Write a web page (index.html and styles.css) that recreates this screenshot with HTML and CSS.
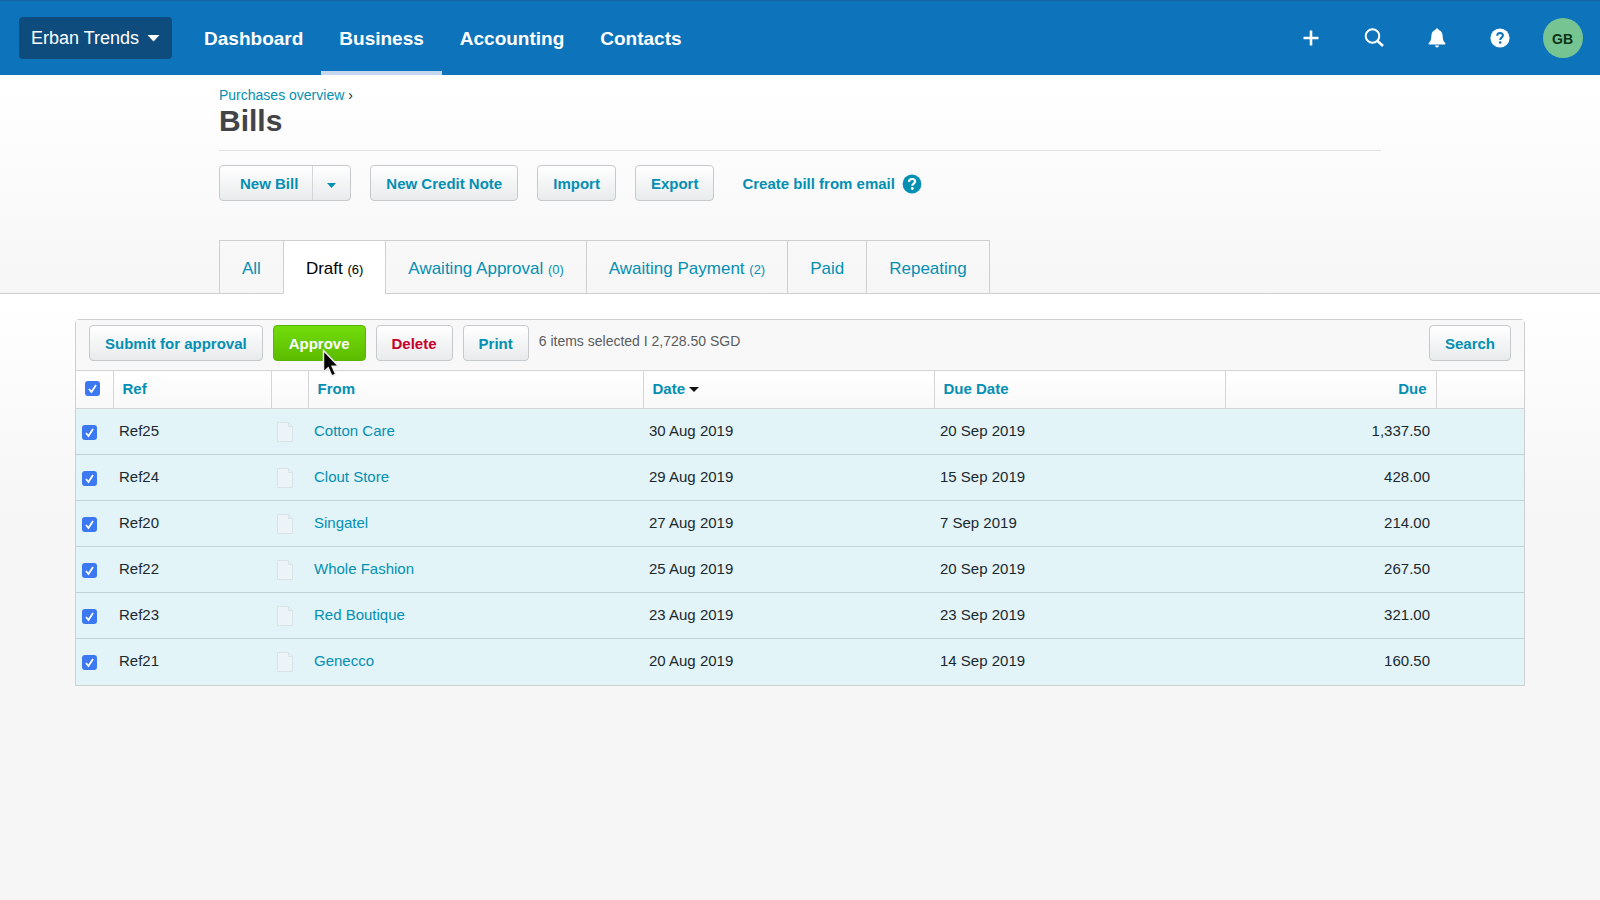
FILE: index.html
```html
<!DOCTYPE html>
<html lang="en">
<head>
  <meta charset="UTF-8">
  <meta name="viewport" content="width=device-width, initial-scale=1.0">
  <title>Bills</title>
  <link rel="stylesheet" href="styles.css">
</head>
<body>
  <header class="topbar">
    <button class="org" type="button">Erban Trends
      <svg width="13" height="7" viewBox="0 0 13 7"><path d="M0.5 0h12L6.5 6.5z" fill="#fff"/></svg>
    </button>
    <nav class="main-nav">
      <a href="#">Dashboard</a>
      <a href="#" class="active">Business</a>
      <a href="#">Accounting</a>
      <a href="#">Contacts</a>
    </nav>
    <div class="tools">
      <button type="button" aria-label="Add">
        <svg width="20" height="20" viewBox="0 0 20 20"><path d="M10 2.500v15M2.500 10h15" stroke="#fff" stroke-width="2.600" fill="none"/></svg>
      </button>
      <button type="button" aria-label="Search">
        <svg width="20" height="20" viewBox="0 0 20 20"><circle cx="8.500" cy="8" r="6.800" stroke="#fff" stroke-width="2" fill="none"/><path d="M13.300 12.800l5.700 5.200" stroke="#fff" stroke-width="2.600" fill="none"/></svg>
      </button>
      <button type="button" aria-label="Notifications">
        <svg width="20" height="20" viewBox="0 0 20 20"><path d="M10 .5c1 0 1.700.7 1.700 1.600 2.500.8 3.700 2.800 3.900 5.400.2 4 .7 6.200 2.700 7.500v1.400H1.700V15c2-1.300 2.500-3.500 2.700-7.500.2-2.600 1.400-4.600 3.900-5.400C8.300 1.200 9 .5 10 .5z" fill="#fff"/><path d="M8 17.500h4c0 1.100-.8 1.900-2 1.900s-2-.8-2-1.900z" fill="#fff"/></svg>
      </button>
      <button type="button" aria-label="Help">
        <svg width="20" height="20" viewBox="0 0 20 20"><circle cx="10" cy="10" r="9.600" fill="#fff"/><path d="M7.200 7.800c0-1.900 1.200-2.900 2.900-2.900s2.800 1 2.800 2.500c0 2.100-2.700 2.200-2.700 4.600" stroke="#0d73bb" stroke-width="2" fill="none"/><circle cx="10.200" cy="14.500" r="1.300" fill="#0d73bb"/></svg>
      </button>
      <button type="button" aria-label="Account"><span class="avatar">GB</span></button>
    </div>
  </header>

  <section class="page-head">
    <div class="container">
      <div class="crumbs"><a href="#">Purchases overview</a> ›</div>
      <h1>Bills</h1>
      <div class="actions">
        <div class="split">
          <button type="button" class="split-main">New Bill</button>
          <button type="button" class="split-more" aria-label="More options">
            <svg width="9" height="5" viewBox="0 0 9 5"><path d="M0 0h9L4.500 5z" fill="#048fb3"/></svg>
          </button>
        </div>
        <button type="button" class="btn">New Credit Note</button>
        <button type="button" class="btn">Import</button>
        <button type="button" class="btn">Export</button>
        <a href="#" class="email-link">Create bill from email
          <svg width="20" height="20" viewBox="0 0 20 20"><circle cx="10" cy="10" r="9.400" fill="#048fb3"/><path d="M7 7.900c0-1.900 1.300-2.900 3.100-2.900s3 1 3 2.500c0 2.100-2.800 2.200-2.800 4.300" stroke="#fff" stroke-width="2.200" fill="none"/><circle cx="10.300" cy="14.500" r="1.400" fill="#fff"/></svg>
        </a>
      </div>
      <nav class="tabs">
        <a href="#">All</a>
        <a href="#" class="active">Draft <small>(6)</small></a>
        <a href="#">Awaiting Approval <small>(0)</small></a>
        <a href="#">Awaiting Payment <small>(2)</small></a>
        <a href="#">Paid</a>
        <a href="#">Repeating</a>
      </nav>
    </div>
  </section>

  <main class="content">
    <div class="panel">
      <div class="toolbar">
        <button type="button" class="btn">Submit for approval</button>
        <div class="approve">
          <button type="button" class="btn btn-green">Approve</button>
          <svg class="pointer" width="18" height="30" viewBox="0 0 18 30"><path d="M1.500 1.500v21.500l4.700-4.300 3.700 8.300 3.800-1.700-3.600-8h6.400z" fill="#000" stroke="#eee" stroke-width="1.500"/></svg>
        </div>
        <button type="button" class="btn btn-red">Delete</button>
        <button type="button" class="btn">Print</button>
        <span class="summary">6 items selected I 2,728.50 SGD</span>
        <button type="button" class="btn search">Search</button>
      </div>
      <table class="bills">
        <colgroup>
          <col class="c-check"><col class="c-ref"><col class="c-file"><col class="c-from"><col class="c-date"><col class="c-date"><col class="c-due"><col class="c-end">
        </colgroup>
        <thead>
          <tr>
            <th><input type="checkbox" aria-label="Select all" checked></th>
            <th><a href="#">Ref</a></th>
            <th></th>
            <th><a href="#">From</a></th>
            <th><a href="#">Date</a> <svg width="10" height="5" viewBox="0 0 10 5"><path d="M0 0h10L5 5z" fill="#111"/></svg></th>
            <th><a href="#">Due Date</a></th>
            <th class="num"><a href="#">Due</a></th>
            <th></th>
          </tr>
        </thead>
        <tbody>
          <tr>
            <td><input type="checkbox" aria-label="Select Ref25" checked></td>
            <td>Ref25</td>
            <td><svg class="file" width="16" height="20" viewBox="0 0 16 20"><path d="M.5.5h11l4 4v15H.5zM11.500.5v4h4"/></svg></td>
            <td><a href="#">Cotton Care</a></td>
            <td>30 Aug 2019</td>
            <td>20 Sep 2019</td>
            <td class="num">1,337.50</td>
            <td></td>
          </tr>
          <tr>
            <td><input type="checkbox" aria-label="Select Ref24" checked></td>
            <td>Ref24</td>
            <td><svg class="file" width="16" height="20" viewBox="0 0 16 20"><path d="M.5.5h11l4 4v15H.5zM11.500.5v4h4"/></svg></td>
            <td><a href="#">Clout Store</a></td>
            <td>29 Aug 2019</td>
            <td>15 Sep 2019</td>
            <td class="num">428.00</td>
            <td></td>
          </tr>
          <tr>
            <td><input type="checkbox" aria-label="Select Ref20" checked></td>
            <td>Ref20</td>
            <td><svg class="file" width="16" height="20" viewBox="0 0 16 20"><path d="M.5.5h11l4 4v15H.5zM11.500.5v4h4"/></svg></td>
            <td><a href="#">Singatel</a></td>
            <td>27 Aug 2019</td>
            <td>7 Sep 2019</td>
            <td class="num">214.00</td>
            <td></td>
          </tr>
          <tr>
            <td><input type="checkbox" aria-label="Select Ref22" checked></td>
            <td>Ref22</td>
            <td><svg class="file" width="16" height="20" viewBox="0 0 16 20"><path d="M.5.5h11l4 4v15H.5zM11.500.5v4h4"/></svg></td>
            <td><a href="#">Whole Fashion</a></td>
            <td>25 Aug 2019</td>
            <td>20 Sep 2019</td>
            <td class="num">267.50</td>
            <td></td>
          </tr>
          <tr>
            <td><input type="checkbox" aria-label="Select Ref23" checked></td>
            <td>Ref23</td>
            <td><svg class="file" width="16" height="20" viewBox="0 0 16 20"><path d="M.5.5h11l4 4v15H.5zM11.500.5v4h4"/></svg></td>
            <td><a href="#">Red Boutique</a></td>
            <td>23 Aug 2019</td>
            <td>23 Sep 2019</td>
            <td class="num">321.00</td>
            <td></td>
          </tr>
          <tr>
            <td><input type="checkbox" aria-label="Select Ref21" checked></td>
            <td>Ref21</td>
            <td><svg class="file" width="16" height="20" viewBox="0 0 16 20"><path d="M.5.5h11l4 4v15H.5zM11.500.5v4h4"/></svg></td>
            <td><a href="#">Genecco</a></td>
            <td>20 Aug 2019</td>
            <td>14 Sep 2019</td>
            <td class="num">160.50</td>
            <td></td>
          </tr>
        </tbody>
      </table>
    </div>
  </main>
</body>
</html>
```

FILE: styles.css
```css
* {
  box-sizing: border-box;
}

body {
  margin: 0;
  background-color: #f6f6f6;
  color: #1c2830;
  font-family: "Liberation Sans", Arial, sans-serif;
  font-size: 15px;
  line-height: 18px;
}

a {
  color: #048fb3;
  text-decoration: none;
}

button {
  margin: 0;
  font-family: inherit;
  cursor: pointer;
}

svg {
  flex: none;
}

/* top bar */
.topbar {
  display: flex;
  align-items: center;
  height: 75px;
  padding: 0 6px 0 19px;
  background-color: #0d73bb;
  border-top: 1px solid #1565a0;
}

.org {
  display: flex;
  align-items: center;
  gap: 8px;
  height: 42px;
  margin-right: 14px;
  padding: 0 12px;
  border: none;
  border-radius: 4px;
  background-color: #0f4c7e;
  color: #fff;
  font-size: 18px;
}

.main-nav {
  display: flex;
  align-self: stretch;
}

.main-nav a {
  display: flex;
  align-items: center;
  padding: 6px 18px 0;
  border-bottom: 4px solid transparent;
  color: #fff;
  font-size: 19px;
  font-weight: bold;
}

.main-nav .active {
  border-bottom-color: #c5d8f0;
}

.tools {
  display: flex;
  margin-left: auto;
}

.tools button {
  display: flex;
  align-items: center;
  justify-content: center;
  width: 63px;
  height: 42px;
  padding: 0;
  border: none;
  background: none;
}

.avatar {
  width: 40px;
  height: 40px;
  border-radius: 50%;
  background-color: #76c491;
  color: #0b3316;
  font-size: 14px;
  font-weight: bold;
  line-height: 42px;
}

/* page heading */
.page-head {
  background: linear-gradient(#fff, #f6f6f7);
  border-bottom: 1px solid #cdcfd1;
}

.container {
  max-width: 1162px;
  margin: 0 auto;
  padding-top: 12px;
}

.crumbs {
  font-size: 14px;
  line-height: 17px;
}

h1 {
  margin: 0;
  padding-bottom: 12px;
  border-bottom: 1px solid #dfe1e2;
  color: #434447;
  font-size: 30px;
  line-height: 34px;
}

.actions {
  display: flex;
  align-items: flex-start;
  gap: 19px;
  padding: 14px 0 37px;
}

.btn,
.split {
  height: 36px;
  border: 1px solid #c6cacd;
  border-radius: 4px;
  background: linear-gradient(#fff, #e8ebec);
}

.btn {
  padding: 0 15px;
  color: #048fb3;
  font-size: 15px;
  font-weight: bold;
}

.btn-green {
  border-color: #5cb400;
  background: linear-gradient(#72dc0c, #5cbc00);
  color: #fff;
}

.btn-red {
  color: #c8002a;
}

.split {
  display: flex;
}

.split button {
  border: none;
  background: none;
  color: #048fb3;
  font-size: 15px;
  font-weight: bold;
}

.split-main {
  padding: 0 14px 0 20px;
}

.split .split-more {
  display: flex;
  align-items: center;
  justify-content: center;
  width: 38px;
  padding: 4px 0 0;
  border-left: 1px solid #d3d6d8;
}

.email-link {
  display: flex;
  align-items: center;
  gap: 7px;
  height: 38px;
  margin-left: 9px;
  font-weight: bold;
}

.tabs {
  display: flex;
  margin-bottom: -1px;
}

.tabs a {
  height: 54px;
  padding: 0 22px;
  border: 1px solid #cdcfd1;
  border-right: none;
  font-size: 17px;
  line-height: 56px;
}

.tabs a:last-child {
  border-right: 1px solid #cdcfd1;
}

.tabs small {
  font-size: 13px;
}

.tabs .active {
  border-bottom-color: #fff;
  background-color: #fff;
  color: #000;
}

/* bills list */
.content {
  padding: 25px 75px 40px;
  background: linear-gradient(#fff, #f6f6f6 220px);
}

.panel {
  border: 1px solid #cdcfd1;
  border-radius: 4px 4px 0 0;
}

.toolbar {
  display: flex;
  align-items: flex-start;
  gap: 10px;
  padding: 5px 13px 9px;
  background-color: #f8f8f8;
}

.approve {
  position: relative;
}

.pointer {
  position: absolute;
  left: 49px;
  top: 24px;
}

.summary {
  color: #5a5c60;
  font-size: 14px;
  line-height: 32px;
}

.search {
  margin-left: auto;
}

.bills {
  width: 100%;
  border-collapse: collapse;
  table-layout: fixed;
}

.c-check { width: 37px; }
.c-ref { width: 158px; }
.c-file { width: 37px; }
.c-from { width: 335px; }
.c-date { width: 291px; }
.c-due { width: 211px; }

.bills th,
.bills td {
  height: 46px;
  padding: 0 6px;
  text-align: left;
}

.bills th {
  height: 38px;
  padding: 0 9px 2px;
  border: 1px solid #d3d5d7;
  background: linear-gradient(#fff, #f8f8f8);
}

.bills th:first-child {
  border-left: none;
}

.bills th:last-child {
  border-right: none;
}

.bills td {
  padding-bottom: 2px;
  border-bottom: 1px solid #c3d2d6;
  background-color: #e2f4f7;
}

.bills tr:last-child td {
  border-bottom: none;
}

.bills .num {
  text-align: right;
}

.bills th svg {
  vertical-align: 2px;
}

.bills input {
  appearance: none;
  display: block;
  width: 15px;
  height: 15px;
  margin: 0;
  border-radius: 3px;
  background: #3b78f2 url("data:image/svg+xml,%3Csvg xmlns='http://www.w3.org/2000/svg' viewBox='0 0 15 15'%3E%3Cpath d='M4 8l2.500 3L11 4' fill='none' stroke='white' stroke-width='1.800'/%3E%3C/svg%3E");
}

.bills td input {
  margin-top: 3px;
}

.file {
  display: block;
  margin-top: 3px;
  fill: #edf4f7;
  stroke: #dae3e7;
}
```
